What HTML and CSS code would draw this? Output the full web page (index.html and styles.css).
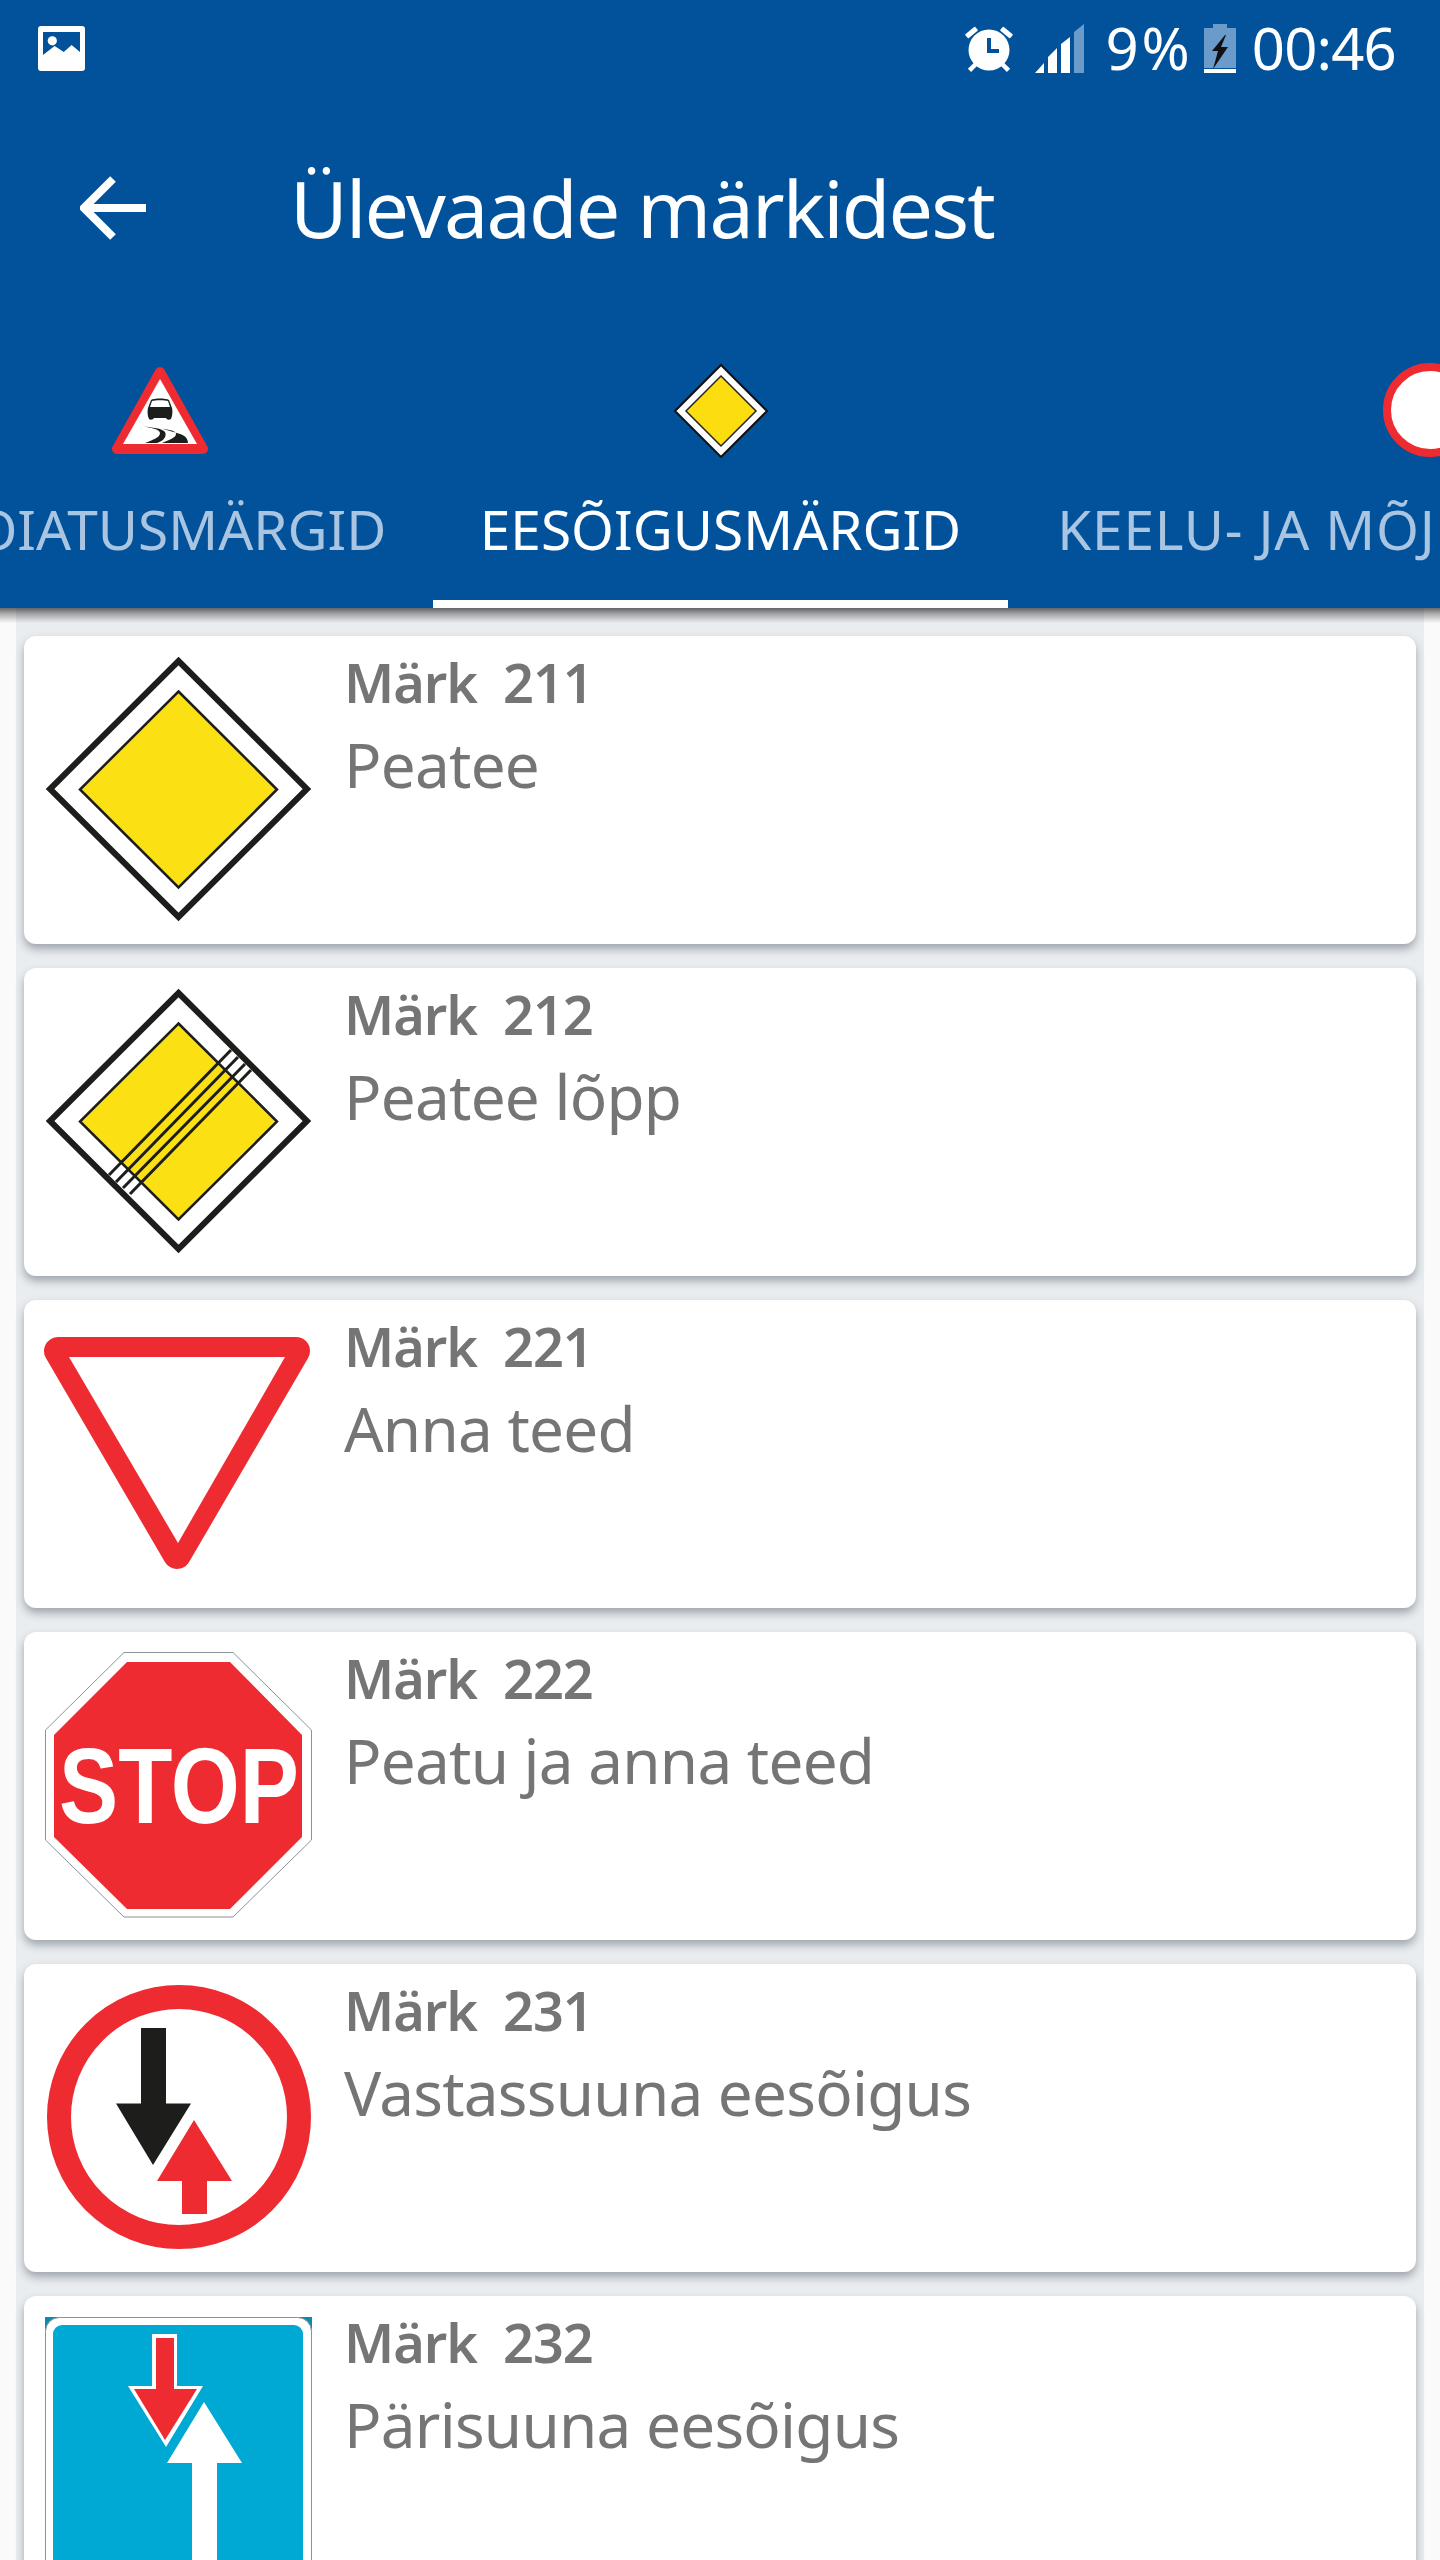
FILE: index.html
```html
<!DOCTYPE html>
<html lang="et">
<head>
<meta charset="utf-8">
<title>Ülevaade märkidest</title>
<link rel="stylesheet" href="styles.css">
</head>
<body>
<div class="screen">
  <header class="appbar">
    <div class="status">
      <svg class="ic-picture" viewBox="0 0 47 45"><rect width="47" height="45" rx="3" class="white"/><path class="blue" d="M5 6H42V26L33.6 19 25.8 26 16.6 20 5 29Z"/><circle cx="14.3" cy="14.8" r="4.6" class="white"/></svg>
      <div class="status-right">
        <svg class="ic-alarm" viewBox="0 0 48 48"><circle cx="24" cy="26" r="20.500" class="white"/><rect x="0" y="6" width="13" height="5" rx="1" class="white" transform="rotate(-40 6.500 8.500)"/><rect x="35" y="6" width="13" height="5" rx="1" class="white" transform="rotate(40 41.500 8.500)"/><rect x="3" y="41" width="9" height="4.500" class="white" transform="rotate(-45 7.500 43)"/><rect x="36" y="41" width="9" height="4.500" class="white" transform="rotate(45 40.500 43)"/><path class="hand" d="M24 14V27H34"/></svg>
        <svg class="ic-signal" viewBox="0 0 49 49"><path class="white" d="M0 49 9 39V49ZM13 49V33L22 24V49ZM26 49V20L35 13V49Z"/><path class="faded" d="M39 49V8L49 0V49Z"/></svg>
        <span class="status-text percent">9%</span>
        <svg class="ic-battery" viewBox="0 0 32 49"><path class="faded" d="M0 4H9V0H23V4H32V44H0Z"/><rect y="45" width="32" height="4" class="white"/><path class="bolt" d="M21 11 8 27H14L9 45 24 23H17L22 11Z"/></svg>
        <span class="status-text time">00:46</span>
      </div>
    </div>
    <div class="toolbar">
      <svg class="ic-back" viewBox="0 0 66 64"><path class="back-stroke" d="M66 32H5M33 3 4 32 33 61"/></svg>
      <h1 class="title">Ülevaade märkidest</h1>
    </div>
    <nav class="tabs">
      <div class="tab tab-warn">
        <svg class="tab-icon" viewBox="0 0 96 96"><path class="warn-edge" d="M48 10 5 87H91Z"/><path class="white" d="M48 17 11 82H85Z"/><path class="black-fill" d="M39 38C42 36 54 36 57 38L60 46C61 50 60 55 59 57 57 58 55 58 54 56H42C41 58 38 58 37 57 36 55 35 50 36 46ZM40 39 38 45H58L56 39C53 38 43 38 40 39Z"/><path class="road" d="M31 64C38 66 48 67 48 71 48 76 40 78 33 81H45C52 79 55 74 53 70 50 66 40 66 31 64ZM48 66C55 68 64 68 64 72 64 76 56 78 50 81H76C76 76 72 73 68 72 62 70 54 68 48 66Z"/></svg>
        <span class="tab-label">HOIATUSMÄRGID</span>
      </div>
      <div class="tab tab-active">
        <svg class="tab-icon" viewBox="0 0 96 96"><path class="dia-edge-white" d="M48 3 94 49 48 95 2 49Z"/><path class="dia-yellow-thin" d="M48 14 83 49 48 84 13 49Z"/></svg>
        <span class="tab-label">EESÕIGUSMÄRGID</span>
      </div>
      <div class="tab tab-ban">
        <svg class="tab-icon" viewBox="0 0 96 96"><circle cx="48" cy="48" r="43" class="ban-ring"/></svg>
        <span class="tab-label">KEELU- JA MÕJUTUSMÄRGID</span>
      </div>
    </nav>
  </header>

  <main class="list-wrap">
    <div class="list">
      <article class="card">
        <svg class="sign" viewBox="0 0 267 267"><path class="dia-outer" d="M133.500 5 262 133 133.500 261 5 133Z"/><path class="dia-inner" d="M133.500 35.500 232 133.500 133.500 231.500 35 133.500Z"/></svg>
        <div class="card-text"><div class="code">Märk  211</div><div class="name">Peatee</div></div>
      </article>
      <article class="card">
        <svg class="sign" viewBox="0 0 267 267"><path class="dia-outer" d="M133.500 5 262 133 133.500 261 5 133Z"/><path class="dia-inner" d="M133.500 35.500 232 133.500 133.500 231.500 35 133.500Z"/><path class="cross" d="M64 187 186 62M71 194 193 69M78 200 200 76M85 206 206 82"/></svg>
        <div class="card-text"><div class="code">Märk  212</div><div class="name">Peatee lõpp</div></div>
      </article>
      <article class="card">
        <svg class="sign" viewBox="0 0 267 267"><path class="yield-edge" d="M13 31H251L132 235Z"/><path class="white" d="M24 37H240L133 223Z"/></svg>
        <div class="card-text"><div class="code">Märk  221</div><div class="name">Anna teed</div></div>
      </article>
      <article class="card">
        <svg class="sign" viewBox="0 0 267 267"><path class="stop-outer" d="M79 .5H188L266.500 78V188L188 265H79L.5 188V78Z"/><path class="red" d="M82 10H185L257 83V185L185 257H82L9 185V83Z"/><text class="stop-text" x="14" y="171" textLength="240" lengthAdjust="spacingAndGlyphs">STOP</text></svg>
        <div class="card-text"><div class="code">Märk  222</div><div class="name">Peatu ja anna teed</div></div>
      </article>
      <article class="card">
        <svg class="sign" viewBox="0 0 267 267"><circle cx="134" cy="133" r="120" class="ring"/><path class="black-fill" d="M96 44H121V119.500H146L108 181 71 119.500H96Z"/><path class="red" d="M149 136 187 197H162V230H137V197H112Z"/></svg>
        <div class="card-text"><div class="code">Märk  231</div><div class="name">Vastassuuna eesõigus</div></div>
      </article>
      <article class="card">
        <svg class="sign" viewBox="0 0 267 267"><rect y="1" width="267" height="266" class="teal"/><rect x=".5" y="1.500" width="266" height="280" rx="14" class="panel-edge"/><rect x="8" y="9" width="250" height="270" rx="9" class="cyan"/><path class="white" d="M107 18H132V70H158L121 131 83 70H107Z"/><path class="red" d="M111 22H129V73H152L120 124 89 73H111Z"/><path class="white" d="M159 86 197 147H172V267H147V147H122Z"/></svg>
        <div class="card-text"><div class="code">Märk  232</div><div class="name">Pärisuuna eesõigus</div></div>
      </article>
    </div>
  </main>
</div>
</body>
</html>
```

FILE: styles.css
```css
* { box-sizing: border-box; }

html, body {
  margin: 0;
  height: 100%;
  overflow: hidden;
}

body {
  font-family: "Noto Sans", sans-serif;
  background: #fafafa;
}

.screen {
  height: 2560px;
  display: flex;
  flex-direction: column;
  overflow: hidden;
}

.appbar {
  position: relative;
  z-index: 2;
  flex: none;
  height: 608px;
  background: #01529b;
  color: #fff;
}

.appbar::after {
  content: "";
  position: absolute;
  left: 0;
  right: 0;
  top: 100%;
  height: 15px;
  background: linear-gradient(rgba(0, 0, 0, .58), rgba(0, 0, 0, .3) 40%, rgba(0, 0, 0, 0));
}

/* status bar */
.status {
  height: 96px;
  padding: 0 44px 0 38px;
  display: flex;
  align-items: center;
  justify-content: space-between;
}

.status-right {
  display: flex;
  align-items: center;
}

.ic-picture { width: 47px; height: 45px; }
.ic-alarm { width: 48px; height: 48px; }
.ic-signal { width: 49px; height: 49px; margin-left: 22px; }
.ic-battery { width: 32px; height: 49px; margin-left: 11px; }

.status-text {
  font-size: 58px;
  line-height: 60px;
}

.status-text.percent { margin-left: 21px; letter-spacing: 3px; }
.status-text.time { margin-left: 16px; letter-spacing: -.8px; }

.white { fill: #fff; }
.blue { fill: #01529b; }
.faded { fill: #6a9bca; }
.bolt { fill: #111; }
.hand { fill: none; stroke: #01529b; stroke-width: 4; }

/* toolbar */
.toolbar {
  height: 224px;
  padding-left: 80px;
  display: flex;
  align-items: center;
}

.ic-back { width: 66px; height: 64px; flex: none; }
.back-stroke { fill: none; stroke: #fff; stroke-width: 8; }

.title {
  margin: 0 0 0 144px;
  font-size: 79px;
  font-weight: 400;
  letter-spacing: -1.8px;
  line-height: 96px;
  white-space: nowrap;
}

/* tabs */
.tabs {
  height: 288px;
  margin-left: -113px;
  display: flex;
  white-space: nowrap;
}

.tab {
  flex: none;
  height: 288px;
  padding: 42px 50px 0;
  display: flex;
  flex-direction: column;
  align-items: center;
  color: #a9c5e2;
}

.tab-warn { width: 546px; }
.tab-active { width: 575px; color: #fff; border-bottom: 8px solid #fff; }
.tab-ban { width: 844px; }
.tab-ban .tab-label { letter-spacing: .8px; }

.tab-icon { width: 96px; height: 96px; flex: none; }

.tab-label {
  margin-top: 35px;
  font-size: 55px;
  line-height: 72px;
}

.warn-edge { fill: #ef2b32; stroke: #ef2b32; stroke-width: 10; stroke-linejoin: round; }
.road { fill: #1d1d1b; }
.dia-edge-white { fill: #fff; stroke: #111; stroke-width: 2; }
.dia-yellow-thin { fill: #fcdd10; stroke: #222; stroke-width: 1.5; }
.ban-ring { fill: #fff; stroke: #ef2b32; stroke-width: 8; }

/* list */
.list-wrap {
  flex: 1;
  min-height: 0;
  margin: 0 16px;
  background: #e9edf0;
}

.list {
  padding: 28px 8px 0;
  display: flex;
  flex-direction: column;
  gap: 24px;
}

.card {
  flex: none;
  height: 308px;
  padding: 20px 21px;
  display: flex;
  align-items: flex-start;
  background: #fff;
  border-radius: 12px;
  box-shadow: 0 5px 8px rgba(70, 80, 90, .45);
}

.sign {
  flex: none;
  width: 267px;
  height: 267px;
  overflow: visible;
}

.card-text {
  margin: 0 0 0 32px;
  color: #757575;
}

.code {
  font-size: 54px;
  font-weight: 560;
  letter-spacing: -1px;
  line-height: 64px;
  white-space: pre;
  margin-top: -6px;
}

.name {
  font-size: 62px;
  letter-spacing: -.75px;
  line-height: 84px;
  margin-top: 8px;
}

/* signs */
.dia-outer { fill: #fff; stroke: #1d1d1b; stroke-width: 6; }
.dia-inner { fill: #fbe014; stroke: #1d1d1b; stroke-width: 2.500; }
.cross { fill: none; stroke: #1d1d1b; stroke-width: 3; }
.yield-edge { fill: #ef2b32; stroke: #ef2b32; stroke-width: 28; stroke-linejoin: round; }
.stop-outer { fill: #fff; stroke: #8d9396; stroke-width: 1; }
.red { fill: #ef2b32; }
.stop-text {
  font-family: "Liberation Sans", sans-serif;
  font-size: 108px;
  font-weight: 700;
  fill: #fff;
}
.ring { fill: #fff; stroke: #ef2b32; stroke-width: 24; }
.black-fill { fill: #1d1d1b; }
.teal { fill: #0a8cb0; }
.panel-edge { fill: #fff; stroke: #8d9396; stroke-width: 1; }
.cyan { fill: #00a8d4; }
```
